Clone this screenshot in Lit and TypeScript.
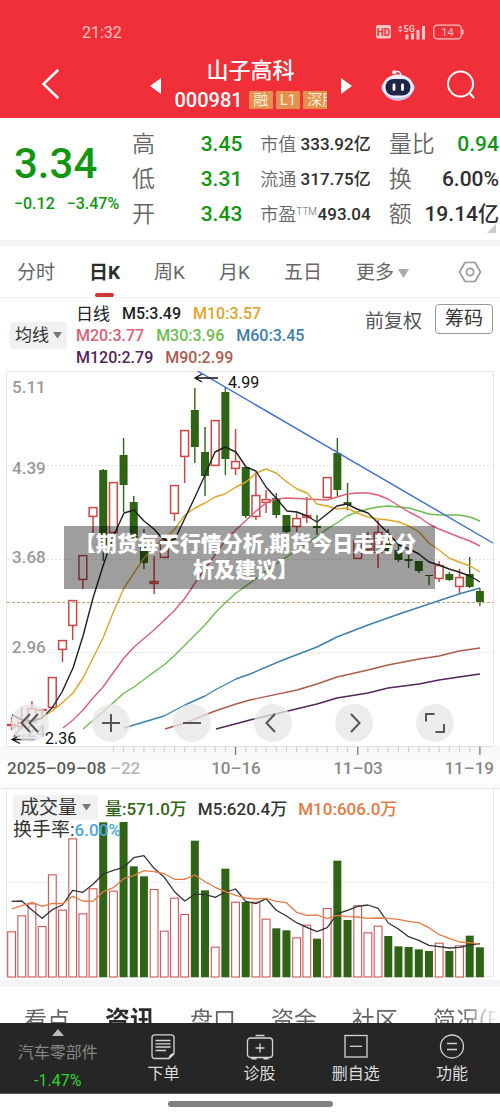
import { LitElement, html, svg, css } from "lit";
import { customElement, state } from "lit/decorators.js";
import { classMap } from "lit/directives/class-map.js";

const STEP = 10.18;
const FIRST = 11.6;
const cx = (i: number) => FIRST + STEP * i;

type Candle = [up: 0 | 1, high: number, top: number, bottom: number, low: number];

const CANDLES: Candle[] = [
  [1, 717, 724, 726, 730], [1, 707, 722, 727, 729], [1, 701, 708, 723, 723], [1, 709, 709, 711, 716],
  [1, 677, 677, 708, 708], [1, 640, 640, 650, 662], [1, 600, 600, 626, 640], [1, 555, 555, 580, 589],
  [1, 507, 507, 517, 535], [0, 469, 470, 545, 561], [1, 482, 482, 533, 533], [0, 438, 455, 485, 512],
  [0, 496, 502, 538, 538], [0, 529, 545, 563, 569], [1, 556, 581, 584, 594], [1, 536, 540, 558, 558],
  [1, 485, 485, 514, 521], [1, 430, 430, 457, 483], [0, 388, 410, 447, 463], [0, 427, 452, 476, 496],
  [1, 420, 420, 466, 466], [0, 387, 392, 459, 475], [1, 429, 461, 469, 475], [0, 467, 467, 516, 518],
  [1, 472, 495, 517, 520], [1, 490, 499, 503, 513], [0, 493, 498, 515, 518], [0, 515, 515, 532, 533],
  [1, 513, 518, 527, 532], [1, 497, 515, 518, 523], [0, 515, 526, 528, 535], [1, 477, 477, 498, 498],
  [0, 438, 453, 490, 496], [0, 483, 502, 505, 510], [1, 540, 540, 559, 559], [1, 532, 540, 550, 554],
  [1, 520, 532, 553, 568], [0, 529, 540, 551, 554], [0, 543, 550, 560, 562], [0, 555, 559, 561, 568],
  [0, 561, 561, 571, 573], [0, 575, 575, 576, 585], [1, 561, 565, 579, 582], [0, 572, 574, 580, 581],
  [1, 569, 577, 587, 593], [0, 557, 574, 587, 588], [0, 588, 591, 602, 606],
];

const AVERAGES: { color: string; points: string }[] = [
  { color: "#54245c", points: "216,729 250,720 292,710 317,704 337,698 368,693 388,688 419,684 439,680 459,677 480,674" },
  { color: "#ad5b4b", points: "165,729 185,723 215,711 236,704 250,700 297,690 317,684 337,677 368,670 388,665 419,659 439,656 459,651 480,648" },
  { color: "#3c80ae", points: "124,728 144,722 164,716 185,705 205,696 215,690 236,679 250,674 283,660 317,647 337,637 368,625 399,614 429,604 459,594 480,588" },
  { color: "#6cbd4e", points: "83,729 103,712 124,693 134,687 154,672 164,665 174,656 195,635 205,625 215,613 225,603 236,593 250,583 276,564 297,550 317,537 327,529 337,523 347,516 357,512 368,509 378,507 388,506 399,507 409,508 419,511 429,514 439,515 459,515 470,517 480,521" },
  { color: "#dc6076", points: "63,728 73,720 83,710 93,698 103,687 113,673 124,658 134,647 154,630 174,611 185,598 197,580 215,555 227,538 240,526 256,511 266,503 276,499 287,498 327,500 337,497 347,494 357,493 368,493 378,495 388,499 399,506 409,512 419,517 429,524 439,529 449,533 459,537 470,541 480,546" },
  { color: "#e0a528", points: "22,725 32,722 42,718 52,711 62,703 73,693 83,678 93,658 103,638 113,613 124,588 134,573 144,558 154,547 164,539 174,530 185,515 195,508 205,503 215,497 225,494 236,487 246,482 256,473 266,469 276,473 287,482 297,489 307,493 317,504 327,506 337,509 347,508 357,513 368,517 378,519 388,520 399,522 409,526 419,532 429,543 439,550 449,558 459,562 470,566 480,572" },
  { color: "#202020", points: "12,715 22,720 32,721 42,718 52,708 62,692 73,668 83,636 93,598 103,566 113,537 124,513 134,510 144,521 154,529 162,538 168,541 175,539 185,518 195,497 205,475 215,452 225,447 236,452 246,467 256,471 266,487 276,498 287,511 297,512 307,516 317,522 327,514 337,506 347,504 357,509 368,513 378,523 388,533 399,545 409,549 419,554 429,562 439,565 449,569 459,572 470,576 480,582" },
];

/* Bar tops, measured in thirds of a unit down from the top of the panel. */
const VOLUMES = [
  439, 391, 355, 423, 268, 374, 160, 385, 310, 112, 317, 111, 244, 274, 312, 437, 338, 387, 167, 316, 485, 251, 350,
  351, 350, 401, 430, 436, 457, 419, 461, 369, 227, 405, 361, 442, 422, 453, 484, 486, 493, 498, 473, 498, 481, 452, 487,
];
const VOL_M5 = [
  349, 348, 375, 400, 374, 360, 316, 322, 298, 267, 256, 247, 218, 212, 250, 277, 320, 348, 328, 328, 337, 321, 312,
  349, 356, 341, 376, 393, 413, 427, 440, 428, 386, 376, 364, 360, 370, 414, 432, 455, 466, 481, 485, 489, 487, 480, 476,
];
const VOL_M10 = [
  372, 362, 352, 364, 355, 356, 334, 348, 349, 320, 308, 281, 272, 257, 260, 266, 283, 283, 270, 290, 307, 320, 331,
  339, 342, 340, 349, 353, 382, 391, 390, 401, 391, 395, 396, 400, 399, 400, 403, 409, 413, 428, 449, 460, 471, 473, 478,
];
const vy = (v: number) => v / 3 - 4;

const shared = css`
  :host {
    display: block;
  }
  * {
    box-sizing: border-box;
  }
  svg {
    display: block;
  }
  button,
  select {
    margin: 0;
    padding: 0;
    border: 0;
    background: none;
    color: inherit;
    font: inherit;
    cursor: pointer;
  }
`;

@customElement("stock-header")
class StockHeader extends LitElement {
  static styles = [
    shared,
    css`
      .header {
        background: #f12f38;
        color: #fff;
      }
      .status {
        display: flex;
        justify-content: space-between;
        align-items: center;
        height: 50px;
        padding: 14px 36px 0 82px;
        font-size: 16px;
        color: #ffc4c6;
      }
      .indicators {
        display: flex;
        align-items: center;
        gap: 6px;
      }
      .row {
        display: grid;
        grid-template-columns: 1fr auto 1fr;
        align-items: center;
        padding: 7px 24px 3px 41px;
      }
      .middle {
        display: flex;
        align-items: center;
        gap: 14px;
        margin-left: -16px;
      }
      .title {
        width: 152px;
        text-align: center;
      }
      .name {
        margin: 0;
        font-size: 22px;
        font-weight: 500;
        line-height: 28px;
      }
      .code {
        display: flex;
        align-items: center;
        gap: 3px;
        overflow: hidden;
        font-size: 20px;
        font-weight: 500;
        line-height: 30px;
      }
      .number {
        margin-right: 3px;
      }
      .tag {
        flex: none;
        min-width: 24px;
        padding: 0 4px;
        border-radius: 1px;
        background: #e3914c;
        color: #fff0dc;
        font-size: 15px;
        font-weight: 400;
        line-height: 18px;
      }
      .tools {
        display: flex;
        justify-content: flex-end;
        align-items: center;
        gap: 30px;
        padding-bottom: 2px;
      }
    `,
  ];

  render() {
    return html`
      <header class="header">
        <div class="status">
          <span>21:32</span>
          <span class="indicators">
            <svg width="16" height="14" viewBox="0 0 16 14" role="img" aria-label="HD">
              <rect width="15" height="13.5" rx="2" fill="#ffc4c6" />
              <text x="7.5" y="10.5" text-anchor="middle" font-size="10" font-weight="700" fill="#f12f38">HD</text>
            </svg>
            <svg width="29" height="16" viewBox="0 0 29 16" role="img" aria-label="5G" fill="#ffc4c6">
              <path d="M0 4.200 2.300 1.500l2.300 2.700zM0 5.800h4.600L2.300 8.500z" />
              <text x="5.500" y="8" font-size="9" font-weight="700">5G</text>
              <path d="M7.500 10.500h3v5h-3zM13 9h3v6.500h-3zM18.500 6h3v9.500h-3zM24 2h3v13.500h-3z" />
            </svg>
            <svg width="31" height="16" viewBox="0 0 31 16" role="img" aria-label="14">
              <rect x=".7" y="1.200" width="27.600" height="13.600" rx="3.500" fill="none" stroke="#ffc4c6" stroke-width="1.300" />
              <path d="M29.800 5.500v5" stroke="#ffc4c6" stroke-width="1.400" />
              <text x="14.500" y="12" text-anchor="middle" font-size="11" fill="#ffc4c6">14</text>
            </svg>
          </span>
        </div>
        <div class="row">
          <div>
            <button aria-label="返回">
              <svg width="20" height="32" viewBox="0 0 20 32" fill="none" stroke="#fff" stroke-width="2.500" stroke-linecap="round">
                <path d="M16.500 2.500 2.500 16l14 13.500" />
              </svg>
            </button>
          </div>
          <div class="middle">
            <button aria-label="上一只">
              <svg width="11" height="16" viewBox="0 0 11 16" fill="#fff"><path d="M11 0v16L0 8z" /></svg>
            </button>
            <div class="title">
              <h1 class="name">山子高科</h1>
              <div class="code">
                <span class="number">000981</span>
                <span class="tag">融</span><span class="tag">L1</span><span class="tag">深股</span>
              </div>
            </div>
            <button aria-label="下一只">
              <svg width="11" height="16" viewBox="0 0 11 16" fill="#fff"><path d="M0 0v16l11-8z" /></svg>
            </button>
          </div>
          <div class="tools">
            <button aria-label="智能助手">
              <svg width="36" height="34" viewBox="0 0 36 34">
                <path d="M14.500 4.500q5-3 6.500 2.500" fill="none" stroke="#e8e6ff" stroke-width="1.500" />
                <circle cx="14.200" cy="4.300" r="2" fill="#fff" />
                <rect x="1.500" y="14" width="33" height="11" rx="5" fill="#b9bdf0" />
                <ellipse cx="18" cy="19.500" rx="15.500" ry="13" fill="#f0efff" />
                <path d="M4 24q4 8.500 14 8.500T32 24q-5 6-14 6T4 24z" fill="#c9bff3" />
                <rect x="5.500" y="11" width="25" height="16.500" rx="8" fill="#1d2548" />
                <path d="M14 17v4.500M22.500 17v4.500" stroke="#fff" stroke-width="2.800" stroke-linecap="round" />
              </svg>
            </button>
            <button aria-label="搜索">
              <svg width="30" height="30" viewBox="0 0 30 30" fill="none" stroke="#fff" stroke-width="2" stroke-linecap="round">
                <circle cx="14.500" cy="14" r="12.500" /><path d="m23.500 23 4 4.500" />
              </svg>
            </button>
          </div>
        </div>
      </header>
    `;
  }
}

@customElement("quote-panel")
class QuotePanel extends LitElement {
  static styles = [
    shared,
    css`
      .quote {
        position: relative;
        display: flex;
        padding: 9px 1px 8px 14px;
        background: #fff;
        border-bottom: 6px solid #f4f4f4;
      }
      .price {
        flex: none;
        width: 118px;
        padding-top: 8px;
        color: #119611;
        font-weight: 500;
      }
      .last {
        font-size: 42px;
        line-height: 57px;
      }
      .change {
        display: flex;
        gap: 12px;
        font-size: 16px;
        line-height: 24px;
        white-space: nowrap;
      }
      .columns {
        flex: 1;
        display: grid;
        grid-template-columns: repeat(3, 1fr);
        gap: 18px;
      }
      .list {
        margin: 0;
      }
      .item {
        display: flex;
        justify-content: space-between;
        height: 35px;
        line-height: 35px;
        font-size: 21px;
        white-space: nowrap;
      }
      .label {
        color: #666;
        font-size: 23px;
        font-weight: 350;
      }
      .value {
        margin: 0;
        color: #2e2e2e;
        font-weight: 500;
      }
      .small .item {
        font-size: 17px;
      }
      .small .label {
        font-size: 18px;
      }
      .down .value {
        color: #119611;
      }
      .ttm {
        font-size: 10px;
        line-height: 10px;
        vertical-align: 6px;
      }
      .corner {
        position: absolute;
        right: 4px;
        bottom: 7px;
      }
    `,
  ];

  private item(label: unknown, value: string, down = false) {
    return html`<div class=${classMap({ item: true, down })}>
      <dt class="label">${label}</dt>
      <dd class="value">${value}</dd>
    </div>`;
  }

  render() {
    return html`
      <section class="quote">
        <div class="price">
          <div class="last">3.34</div>
          <div class="change"><span>−0.12</span><span>−3.47%</span></div>
        </div>
        <div class="columns">
          <dl class="list">${this.item("高", "3.45", true)}${this.item("低", "3.31", true)}${this.item("开", "3.43", true)}</dl>
          <dl class="list small">
            ${this.item("市值", "333.92亿")}${this.item("流通", "317.75亿")}
            ${this.item(html`市盈<span class="ttm">TTM</span>`, "493.04")}
          </dl>
          <dl class="list">${this.item("量比", "0.94", true)}${this.item("换", "6.00%")}${this.item("额", "19.14亿")}</dl>
        </div>
        <svg class="corner" width="9" height="9" viewBox="0 0 9 9"><path d="M9 0v9H0z" fill="#ccc" /></svg>
      </section>
    `;
  }
}

@customElement("price-chart")
class PriceChart extends LitElement {
  static styles = [
    shared,
    css`
      .periods {
        display: flex;
        align-items: stretch;
        gap: 34px;
        height: 52px;
        padding: 0 18px 0 17px;
        border-bottom: 1px solid #eee;
        font-size: 19px;
        color: #666;
      }
      .period {
        display: flex;
        flex-direction: column;
        align-items: center;
        justify-content: space-between;
        padding-top: 13px;
        line-height: 28px;
        white-space: nowrap;
      }
      .period::after {
        content: "";
        width: 19px;
        height: 4px;
        border-radius: 2px;
      }
      .active {
        color: #2c2c2c;
        font-weight: 700;
      }
      .active::after {
        background: #d03434;
      }
      .more {
        display: flex;
        align-items: center;
        gap: 4px;
      }
      .settings {
        margin-left: auto;
      }
      .legend {
        display: flex;
        align-items: center;
        height: 73px;
        padding: 2px 7px 0 10px;
      }
      .picker {
        position: relative;
        flex: none;
        border-radius: 3px;
        background: #f1f1f1;
        color: #333;
        line-height: 27px;
      }
      .picker select {
        appearance: none;
        padding: 0 18px 0 5px;
        line-height: 27px;
        font-size: 17px;
      }
      .picker svg {
        position: absolute;
        right: 5px;
        top: 10px;
        pointer-events: none;
      }
      .averages {
        flex: 1;
        display: flex;
        flex-direction: column;
        padding-left: 9px;
        font-size: 16px;
        font-weight: 500;
        line-height: 22px;
        white-space: nowrap;
      }
      .line {
        display: flex;
        gap: 12px;
      }
      .day {
        font-size: 17px;
        font-weight: 400;
        color: #222;
      }
      .m5 { color: #202020; }
      .m10 { color: #e0a528; }
      .m20 { color: #dc6076; }
      .m30 { color: #6cbd4e; }
      .m60 { color: #3c80ae; }
      .m120 { color: #54245c; }
      .m90 { color: #ad5b4b; }
      .adjust {
        display: flex;
        align-items: center;
        align-self: flex-start;
        gap: 13px;
        padding-top: 4px;
        color: #555;
        font-size: 19px;
      }
      .chips {
        height: 30px;
        padding: 0 9px;
        border: 1px solid #999;
        border-radius: 4px;
        color: #333;
        line-height: 28px;
      }
      .stage {
        position: relative;
      }
      .plot {
        width: 100%;
        height: auto;
      }
      .banner {
        position: absolute;
        top: 155px;
        left: 64px;
        right: 65px;
        margin: 0;
        padding: 5px 14px 6px 6px;
        background: rgba(0, 0, 0, 0.38);
        color: #fff;
        font-size: 21px;
        font-weight: 900;
        line-height: 26px;
        text-align: center;
      }
      .controls {
        position: absolute;
        left: 11px;
        right: 46px;
        bottom: 4px;
        display: flex;
        justify-content: space-between;
      }
      .round {
        width: 38px;
        height: 38px;
        border-radius: 50%;
        background: rgba(230, 230, 230, 0.75);
      }
      .round svg {
        margin: auto;
      }
      .axis {
        background: linear-gradient(#f6f6f6, #fff 60%, #fafafa);
        border-bottom: 1px solid #e6e6e6;
      }
    `,
  ];

  @state() private period = "日K";

  private candle([up, high, top, bottom, low]: Candle, i: number) {
    const x = cx(i);
    return up
      ? svg`<path d="M${x} ${high}V${top}M${x} ${bottom}V${low}" stroke="#cf4545" stroke-width="1.500" />
          <rect x=${x - 3.9} y=${top + 0.6} width="7.800" height=${Math.max(bottom - top - 1.2, 0.8)} fill="#fff" fill-opacity=".7" stroke="#cf4545" stroke-width="1.500" />`
      : svg`<path d="M${x} ${high}V${low}" stroke="#2f6417" stroke-width="1.400" />
          <rect x=${x - 4} y=${top} width="8" height=${bottom - top} fill="#2f6417" />`;
  }

  private round(label: string, path: string) {
    return html`<button class="round" aria-label=${label}>
      <svg width="24" height="24" viewBox="0 0 24 24" fill="none" stroke="#555" stroke-width="2"><path d=${path} /></svg>
    </button>`;
  }

  render() {
    return html`
      <nav class="periods">
        ${["分时", "日K", "周K", "月K", "五日"].map(
          (p) => html`<button
            class=${classMap({ period: true, active: p === this.period })}
            @click=${() => (this.period = p)}
          >${p}</button>`
        )}
        <button class="period">
          <span class="more">更多<svg width="11" height="9" viewBox="0 0 11 9"><path d="M0 0h11L5.500 9z" fill="#aaa" /></svg></span>
        </button>
        <button class="settings" aria-label="设置">
          <svg width="24" height="24" viewBox="0 0 24 24" fill="none" stroke="#999" stroke-width="1.700" stroke-linejoin="round">
            <path d="M7 2.500h10L22.500 12 17 21.500H7L1.500 12z" /><circle cx="12" cy="12" r="3.600" />
          </svg>
        </button>
      </nav>
      <div class="legend">
        <div class="picker">
          <select aria-label="指标"><option>均线</option></select>
          <svg width="9" height="7" viewBox="0 0 9 7"><path d="M0 0h9L4.500 6.500z" fill="#777" /></svg>
        </div>
        <div class="averages">
          <div class="line"><span class="day">日线</span><span class="m5">M5:3.49</span><span class="m10">M10:3.57</span></div>
          <div class="line"><span class="m20">M20:3.77</span><span class="m30">M30:3.96</span><span class="m60">M60:3.45</span></div>
          <div class="line"><span class="m120">M120:2.79</span><span class="m90">M90:2.99</span></div>
        </div>
        <div class="adjust"><span>前复权</span><button class="chips">筹码</button></div>
      </div>
      <div class="stage">
        <svg class="plot" viewBox="0 371 500 375" role="img" aria-label="日K线图">
          <rect x="6.500" y="371.500" width="487" height="375" fill="none" stroke="#e6e6e6" />
          <g stroke="#e4e4e4" stroke-dasharray="2 2">
            <path d="M7 465.500h486M7 559.500h486M7 652.500h486" />
          </g>
          <g fill="#999" font-size="17" font-weight="500">
            <text x="12" y="393">5.11</text><text x="12" y="474">4.39</text><text x="12" y="563">3.68</text>
            <text x="12" y="653">2.96</text><text x="12" y="737">2.24</text>
          </g>
          ${CANDLES.map((c, i) => this.candle(c, i))}
          <path d="M7 602.500h486" stroke="#bfa574" stroke-dasharray="3 2" />
          ${AVERAGES.map(
            (a) => svg`<polyline points=${a.points} fill="none" stroke=${a.color} stroke-width="1.400" stroke-linejoin="round" />`
          )}
          <path d="M197.500 371 493 543" stroke="#3c6cd0" stroke-width="1.400" />
          <g fill="none" stroke="#111" stroke-width="1.300">
            <path d="M218 378h-23M202 374l-7 4 7 4M35 739.500H12M20 735.500l-8 4 8 4" />
          </g>
          <g fill="#111" font-size="16"><text x="228" y="388">4.99</text><text x="45" y="744">2.36</text></g>
        </svg>
        <p class="banner">【期货每天行情分析,期货今日走势分析及建议】</p>
        <div class="controls">
          ${this.round("快退", "M12 3 3.500 12l8.500 9M20 3l-8.500 9 8.500 9")}
          ${this.round("放大", "M12 3v18M3 12h18")}
          ${this.round("缩小", "M3 12h18")}
          ${this.round("左移", "M14 3 5.500 12l8.500 9")}
          ${this.round("右移", "M9 3l8.500 9L9 21")}
          ${this.round("全屏", "M3 10.500V3h8.500M21 13v8h-8.500")}
        </div>
      </div>
      <div class="axis">
        <svg class="plot" viewBox="0 0 500 42" role="img" aria-label="日期">
          <path d="M7 .5h486" stroke="#ddd" />
          ${Array.from({ length: 37 }, (_, k) => k + 10).map((i) => {
            const major = i === 22 || i === 34 || i === 46;
            return svg`<path d="M${cx(i)} 1v${major ? 8 : 5}" stroke=${major ? "#888" : "#ccc"} stroke-width=${major ? 1.5 : 1} />`;
          })}
          <g fill="#888" font-size="17" font-weight="500">
            <text x="7" y="28" fill="#5c5c5c">2025–09–08</text>
            <text x="110" y="28" fill="#b5b5b5">–22</text>
            <text x="236" y="28" text-anchor="middle">10–16</text>
            <text x="358" y="28" text-anchor="middle">11–03</text>
            <text x="494" y="28" text-anchor="end">11–19</text>
          </g>
        </svg>
      </div>
    `;
  }
}

@customElement("volume-chart")
class VolumeChart extends LitElement {
  static styles = [
    shared,
    css`
      .volume {
        position: relative;
        border-bottom: 7px solid #f4f4f4;
      }
      .plot {
        width: 100%;
        height: auto;
      }
      .info {
        position: absolute;
        top: 6px;
        left: 13px;
        right: 7px;
        white-space: nowrap;
      }
      .top {
        display: flex;
        align-items: center;
        gap: 11px;
        height: 25px;
        font-size: 17px;
        font-weight: 500;
      }
      .picker {
        position: relative;
        margin-right: -4px;
        border-radius: 3px;
        background: #f1f1f1;
        color: #333;
        font-weight: 400;
      }
      .picker select {
        appearance: none;
        padding: 0 20px 0 7px;
        font-size: 19px;
        line-height: 25px;
      }
      .picker svg {
        position: absolute;
        right: 7px;
        top: 9px;
        pointer-events: none;
      }
      .now { color: #2f6417; }
      .m5 { color: #333; }
      .m10 { color: #e57a42; }
      .turnover {
        color: #333;
        font-size: 19px;
        line-height: 19px;
      }
      .rate {
        color: #4ba6dc;
        font-size: 17px;
        font-weight: 500;
      }
    `,
  ];

  private line(values: number[], color: string) {
    const points = values.map((v, i) => `${cx(i).toFixed(1)},${vy(v).toFixed(1)}`).join(" ");
    return svg`<polyline points=${points} fill="none" stroke=${color} stroke-width="1.300" stroke-linejoin="round" />`;
  }

  render() {
    return html`
      <section class="volume">
        <svg class="plot" viewBox="0 0 500 191" role="img" aria-label="成交量图">
          <path d="M6.500 0v187.500h487V0" fill="none" stroke="#e6e6e6" />
          <path d="M7 93.500h486" stroke="#e4e4e4" stroke-dasharray="2 2" />
          ${VOLUMES.map((v, i) => {
            const x = cx(i);
            const y = vy(v);
            return CANDLES[i][0]
              ? svg`<rect x=${x - 3.9} y=${y + 0.5} width="7.800" height=${187.5 - y} fill="#fff" stroke="#cf5555" stroke-width="1.100" />`
              : svg`<rect x=${x - 4} y=${y} width="8" height=${188.3 - y} fill="#2f6417" />`;
          })}
          ${this.line(VOL_M5, "#333")}${this.line(VOL_M10, "#e57a42")}
        </svg>
        <div class="info">
          <div class="top">
            <div class="picker">
              <select aria-label="副图指标"><option>成交量</option></select>
              <svg width="9" height="7" viewBox="0 0 9 7"><path d="M0 0h9L4.500 6.500z" fill="#777" /></svg>
            </div>
            <span class="now">量:571.0万</span><span class="m5">M5:620.4万</span><span class="m10">M10:606.0万</span>
          </div>
          <div class="turnover">换手率:<span class="rate">6.00%</span></div>
        </div>
      </section>
    `;
  }
}

@customElement("action-bar")
class ActionBar extends LitElement {
  static styles = [
    shared,
    css`
      .bar {
        display: grid;
        grid-template-columns: 6fr 5fr 5fr 5fr 5fr;
        height: 71px;
        background: #262626;
        border-bottom: 1px solid #555;
        color: #ddd;
        font-size: 16px;
      }
      .sector,
      .action {
        display: flex;
        flex-direction: column;
        align-items: center;
      }
      .sector {
        padding-top: 6px;
        color: #888;
      }
      .sector-name {
        line-height: 24px;
        padding-top: 5px;
      }
      .sector-change {
        padding-top: 4px;
        line-height: 24px;
        color: #2bd62b;
      }
      .action {
        padding-top: 11px;
      }
      .label {
        line-height: 24px;
        padding-top: 2px;
      }
      .home {
        display: flex;
        justify-content: center;
        height: 22px;
        padding-top: 7px;
        background: #fff;
      }
      .pill {
        width: 33%;
        height: 6px;
        border-radius: 3px;
        background: #808080;
      }
    `,
  ];

  private action(label: string, icon: unknown) {
    return html`<button class="action">
      <svg width="28" height="26" viewBox="0 0 28 26" fill="none" stroke="#d6d6d6" stroke-width="1.300">${icon}</svg>
      <span class="label">${label}</span>
    </button>`;
  }

  render() {
    return html`
      <nav class="bar">
        <button class="sector">
          <svg width="12" height="7" viewBox="0 0 12 7"><path d="M6 0l6 7H0z" fill="#bbb" /></svg>
          <span class="sector-name">汽车零部件</span>
          <span class="sector-change">-1.47%</span>
        </button>
        ${this.action("下单", svg`<path d="M6 .8h16q3 0 3 3V20l-5 4.500H6q-3 0-3-3V3.800q0-3 3-3zM6.500 6.500h15M6.500 9.800h15M6.500 13h15M6.500 16.500h10.500M25 20q-4 0-5 4.500" />`)}
        ${this.action("诊股", svg`<rect x="1.500" y="4" width="25" height="19.500" rx="3" /><path d="M9.500 1.500h9M14 9.500v9M9.500 14h9" /><path d="M5.500 24.500h5M17.500 24.500h5" stroke-width="2" />`)}
        ${this.action("删自选", svg`<rect x="3" y="1.500" width="22" height="21.500" /><path d="M8 12.300h12" />`)}
        ${this.action("功能", svg`<circle cx="14" cy="12.500" r="11.500" /><path d="M9 9.500h10M9 15.500h10" />`)}
      </nav>
      <div class="home"><div class="pill"></div></div>
    `;
  }
}

@customElement("app-root")
class AppRoot extends LitElement {
  static styles = [
    shared,
    css`
      :host {
        display: flex;
        flex-direction: column;
        height: 100vh;
        background: #fff;
        font-family: Roboto, "Noto Sans CJK SC", sans-serif;
      }
      .content {
        flex: 1;
        min-height: 0;
        overflow-x: hidden;
        overflow-y: auto;
        scrollbar-width: none;
      }
      .news {
        display: flex;
        align-items: center;
        gap: 35px;
        height: 62px;
        padding-left: 24px;
        overflow: hidden;
        color: #666;
        font-size: 23px;
        white-space: nowrap;
        mask-image: linear-gradient(to right, #000 92%, transparent);
      }
      .tab {
        flex: none;
      }
      .current {
        color: #2c2c2c;
        font-size: 25px;
        font-weight: 700;
      }
    `,
  ];

  @state() private tab = "资讯";

  render() {
    return html`
      <stock-header></stock-header>
      <main class="content">
        <quote-panel></quote-panel>
        <price-chart></price-chart>
        <volume-chart></volume-chart>
        <nav class="news">
          ${["看点", "资讯", "盘口", "资金", "社区", "简况(F10)"].map(
            (t) => html`<button class=${classMap({ tab: true, current: t === this.tab })} @click=${() => (this.tab = t)}>${t}</button>`
          )}
        </nav>
      </main>
      <action-bar></action-bar>
    `;
  }
}
